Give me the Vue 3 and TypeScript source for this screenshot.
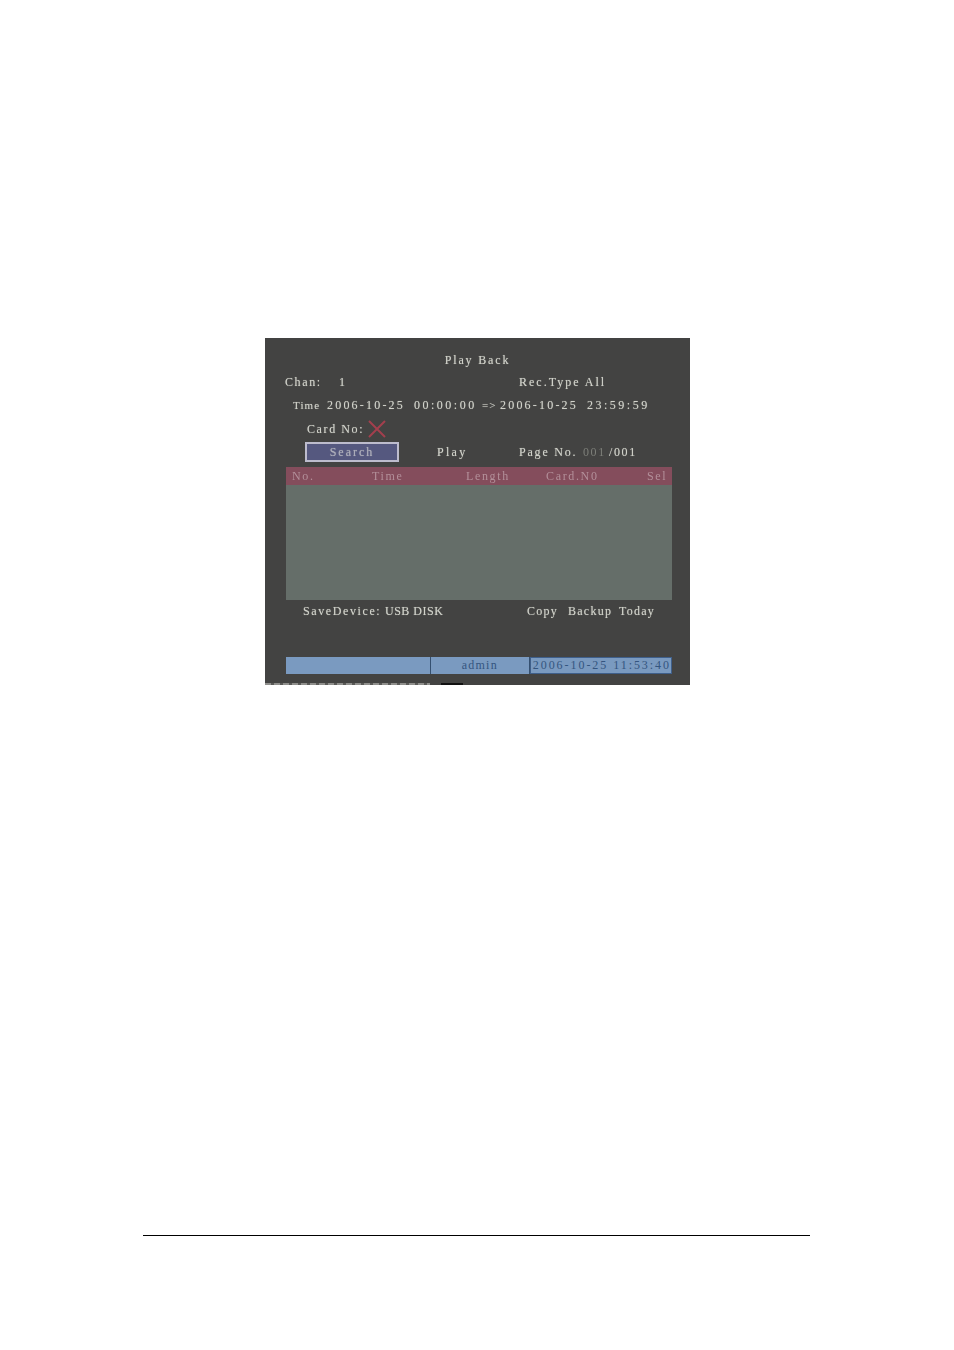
<script setup lang="ts">
const columns: { label: string; width: number }[] = [
  { label: 'No.', width: 80 },
  { label: 'Time', width: 94 },
  { label: 'Length', width: 80 },
  { label: 'Card.N0', width: 101 },
  { label: 'Sel', width: 25 },
]
</script>

<template>
  <main class="page">
    <section class="osd">
      <h1 class="title">Play Back</h1>

      <div class="row row-chan">
        <span class="w54 ls16">Chan:</span>
        <span class="w180">1</span>
        <span class="ls20">Rec.Type All</span>
      </div>

      <div class="row row-time">
        <span class="w34 small">Time</span>
        <span class="w87 date">2006-10-25</span>
        <span class="w68 clock">00:00:00</span>
        <span class="w18 small">=&gt;</span>
        <span class="w87 date">2006-10-25</span>
        <span class="clock">23:59:59</span>
      </div>

      <div class="row row-card">
        <span class="w61 ls16">Card No:</span>
        <svg class="cross" viewBox="0 0 18 18" aria-hidden="true">
          <path d="M1 1 17 17M17 1 1 17" />
        </svg>
      </div>

      <div class="row row-action">
        <button class="search" type="button">Search</button>
        <span class="w82 ls22">Play</span>
        <span class="w64 ls18">Page No.</span>
        <span class="w26 dim ls16">001</span>
        <span class="ls16">/001</span>
      </div>

      <div class="table">
        <div class="thead">
          <span
            v-for="col in columns"
            :key="col.label"
            :style="{ width: col.width + 'px' }"
          >{{ col.label }}</span>
        </div>
        <div class="tbody"></div>
      </div>

      <div class="row row-save">
        <span class="w82 ls16">SaveDevice:</span>
        <span class="w142 ls06">USB DISK</span>
        <span class="w41">Copy</span>
        <span class="w51">Backup</span>
        <span>Today</span>
      </div>

      <div class="status">
        <div class="cell cell-a"></div>
        <div class="cell cell-b">admin</div>
        <div class="cell cell-c">2006-10-25 11:53:40</div>
      </div>

      <div class="edge">
        <div class="dashes"></div>
        <div class="blot"></div>
      </div>
    </section>

    <div class="rule"></div>
  </main>
</template>

<style>
html,
body {
  margin: 0;
  background: #fff;
}
</style>

<style scoped>
.page {
  width: 954px;
  height: 1350px;
  box-sizing: border-box;
  padding-top: 338px;
  background: #fff;
  overflow: hidden;
}

.osd {
  width: 425px;
  height: 347px;
  margin-left: 265px;
  box-sizing: border-box;
  padding-top: 12px;
  display: flex;
  flex-direction: column;
  overflow: hidden;
  background: #434342;
  color: #d2d3cb;
  font-family: "Liberation Serif", serif;
  font-size: 12px;
  letter-spacing: 1.25px;
  white-space: nowrap;
  text-shadow: 0 0 1px rgba(210, 211, 203, 0.55);
}

.title {
  margin: 0;
  height: 21px;
  line-height: 21px;
  font-size: 12px;
  font-weight: 400;
  letter-spacing: 1.85px;
  text-align: center;
  filter: blur(0.45px);
}

.row {
  display: flex;
  align-items: center;
  filter: blur(0.45px);
}

.row span {
  flex: none;
}

.row-chan { height: 22px; padding-left: 20px; }
.row-time { height: 24px; padding-left: 28px; }
.row-card { height: 24px; padding-left: 42px; }
.row-action { height: 20px; margin-top: 1px; padding-left: 40px; }
.row-save { height: 22px; padding-left: 38px; }

.w18 { width: 18px; }
.w26 { width: 26px; }
.w34 { width: 34px; }
.w41 { width: 41px; }
.w51 { width: 51px; }
.w54 { width: 54px; }
.w61 { width: 61px; }
.w64 { width: 64px; }
.w68 { width: 68px; }
.w82 { width: 82px; }
.w87 { width: 87px; }
.w142 { width: 142px; }
.w180 { width: 180px; }

.ls06 { letter-spacing: 0.5px; }
.ls16 { letter-spacing: 1.6px; }
.ls18 { letter-spacing: 1.8px; }
.ls20 { letter-spacing: 2px; }
.ls22 { letter-spacing: 2.3px; }

.small {
  font-size: 11px;
  letter-spacing: 1.1px;
}

.date {
  letter-spacing: 2.2px;
}

.clock {
  letter-spacing: 2.5px;
}

.dim {
  color: #7d7f79;
  text-shadow: none;
}

.cross {
  width: 18px;
  height: 18px;
}

.cross path {
  fill: none;
  stroke: #a33f4d;
  stroke-width: 2;
}

.search {
  width: 94px;
  height: 20px;
  margin-right: 38px;
  padding: 0;
  box-sizing: border-box;
  border: 2px solid #bdbccd;
  background: #55587f;
  color: #aeafbc;
  font: inherit;
  letter-spacing: 2px;
  text-shadow: inherit;
}

.table {
  width: 386px;
  margin: 5px 0 0 21px;
}

.thead {
  display: flex;
  height: 18px;
  align-items: center;
  padding-left: 6px;
  background: #844d5c;
  color: #b3909a;
  letter-spacing: 1.65px;
  text-shadow: none;
}

.thead span {
  flex: none;
  filter: blur(0.4px);
}

.tbody {
  height: 115px;
  background: #656e69;
}

.status {
  display: flex;
  width: 386px;
  height: 17px;
  margin: 35px 0 0 21px;
  gap: 1px;
  background: #355070;
  color: #34557f;
  text-shadow: none;
}

.cell {
  height: 100%;
  line-height: 17px;
  background: #7a9ac0;
}

.cell-a { width: 144px; }
.cell-b { width: 98px; text-align: center; }
.cell-c {
  flex: 1;
  padding-left: 2px;
  letter-spacing: 1.95px;
  box-sizing: border-box;
  border: 1px solid #3f5f8a;
  line-height: 15px;
}

.edge {
  display: flex;
  align-items: flex-end;
  height: 11px;
}

.dashes {
  width: 165px;
  height: 2px;
  background: repeating-linear-gradient(90deg, #8f8f8c 0 6px, #5a5a58 6px 9px);
}

.blot {
  width: 22px;
  height: 2px;
  margin-left: 11px;
  background: #111;
}

.rule {
  width: 667px;
  height: 1px;
  margin: 550px 0 0 143px;
  background: #000;
}
</style>
